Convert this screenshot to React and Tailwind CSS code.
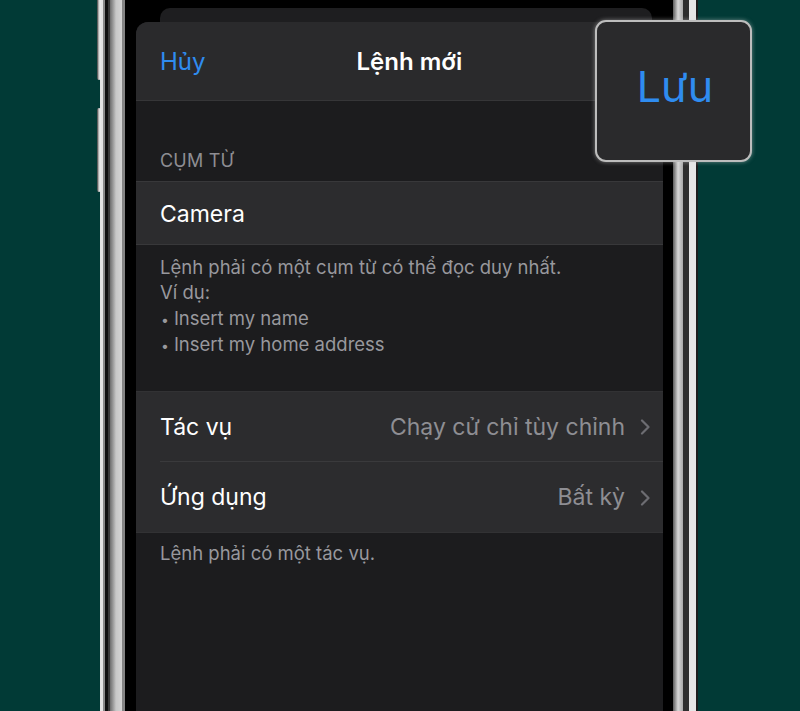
import React from "react";

function Chevron() {
  return (
    <svg width="10" height="16" viewBox="0 0 10 16" fill="none" className="shrink-0">
      <path d="M2 1.5 L8.5 8 L2 14.5" stroke="#6d6d72" strokeWidth="2.2" strokeLinecap="round" strokeLinejoin="round" />
    </svg>
  );
}

function Bullet({ children }) {
  return (
    <div className="flex items-baseline">
      <span className="text-[14px] mr-[5px] ml-[1px]">•</span>
      <span>{children}</span>
    </div>
  );
}

export default function App() {
  return (
    <div
      className="relative w-[800px] h-[711px] overflow-hidden bg-[#013a36] flex"
      style={{ fontFamily: 'Inter, "Noto Sans", "Open Sans", sans-serif' }}
    >
      {/* left margin */}
      <div className="w-[100px] shrink-0" />

      {/* phone left frame stripes */}
      <div className="w-[3px] bg-[#e4e4e4]" />
      <div className="w-[2px] bg-[#8a8a8a]" />
      <div className="w-[3px] bg-[#101010]" />
      <div className="w-[2px] bg-[#3a3a3a]" />
      <div className="w-[12px] bg-gradient-to-r from-[#6e6e6e] via-[#c8c8c8] to-[#d4d4d4]" />
      <div className="w-[3px] bg-[#858585]" />
      <div className="w-[11px] bg-black" />

      {/* screen */}
      <div className="w-[527px] shrink-0 bg-black flex flex-col pt-[8px]">
        <div className="h-[14px] ml-[24px] mr-[11px] rounded-t-[10px] bg-[#1e1e20]" />
        <div className="flex-1 rounded-t-[12px] bg-[#1c1c1e] flex flex-col overflow-hidden">
          {/* header */}
          <div className="h-[79px] bg-[#2a2a2c] border-b border-[#363638] flex items-center px-[24px] pt-[2px]">
            <span className="text-[24px] text-[#2f8cf0] leading-none">Hủy</span>
            <span className="ml-[151px] text-[24px] font-semibold text-white leading-none">Lệnh mới</span>
          </div>

          {/* section 1 */}
          <div className="pt-[48px] px-[24px] pb-[8px]">
            <div className="text-[18px] leading-[24px] text-[#8e8e93] tracking-[0.2px]">CỤM TỪ</div>
          </div>
          <div className="h-[64px] bg-[#2c2c2e] border-y border-[#38383a] flex items-center px-[24px] pt-[2px]">
            <span className="text-[23px] text-white">Camera</span>
          </div>
          <div className="pt-[10px] px-[24px] text-[18.5px] leading-[25.3px] text-[#98989d]">
            <div>Lệnh phải có một cụm từ có thể đọc duy nhất.</div>
            <div>Ví dụ:</div>
            <Bullet>Insert my name</Bullet>
            <Bullet>Insert my home address</Bullet>
          </div>

          {/* section 2 */}
          <div className="mt-[33px] bg-[#2c2c2e] border-y border-[#323234]">
            <div className="h-[70px] flex items-center pl-[24px]">
              <div className="flex-1 h-full flex items-center pr-[13px] border-b border-[#3a3a3c] pt-[1px]">
                <span className="text-[23px] text-white">Tác vụ</span>
                <span className="ml-auto text-[23px] text-[#8e8e93]">Chạy cử chỉ tùy chỉnh</span>
                <span className="ml-[15px]"><Chevron /></span>
              </div>
            </div>
            <div className="h-[70px] flex items-center pl-[24px] pr-[13px] pt-[1px]">
              <span className="text-[23px] text-white">Ứng dụng</span>
              <span className="ml-auto text-[23px] text-[#8e8e93]">Bất kỳ</span>
              <span className="ml-[15px]"><Chevron /></span>
            </div>
          </div>
          <div className="pt-[8px] px-[24px] text-[18.5px] leading-[25.3px] text-[#98989d]">
            Lệnh phải có một tác vụ.
          </div>
        </div>
      </div>

      {/* phone right frame stripes */}
      <div className="w-[10px] bg-black" />
      <div className="w-[10px] bg-gradient-to-r from-[#5e5e5e] via-[#d8d8d8] to-[#a8a8a8]" />
      <div className="w-[6px] bg-[#2e2e2e]" />
      <div className="w-[7px] bg-[#e6e6e6]" />
      <div className="w-[2px] bg-[#1e1e1e]" />
      <div className="flex-1" />

      {/* side buttons (overlay) */}
      <div className="absolute left-[97px] top-0 w-[4px] h-[80px] rounded-b-[2px] bg-gradient-to-r from-[#3a3a3a] via-[#d6d6d6] to-[#f0f0f0]" />
      <div className="absolute left-[97px] top-[108px] w-[4px] h-[84px] rounded-[2px] bg-gradient-to-r from-[#3a3a3a] via-[#d6d6d6] to-[#f0f0f0]" />

      {/* Lưu callout (overlay) */}
      <div className="absolute left-[595px] top-[20px] w-[157px] h-[142px] rounded-[11px] border-2 border-[#bdbdbd] bg-[#2a2a2c] shadow-[0_0_4px_rgba(220,220,220,0.5)] flex items-center justify-center pb-[10px]">
        <span className="text-[43px] text-[#2f8cf0] leading-none pl-[3px]">Lưu</span>
      </div>
    </div>
  );
}
